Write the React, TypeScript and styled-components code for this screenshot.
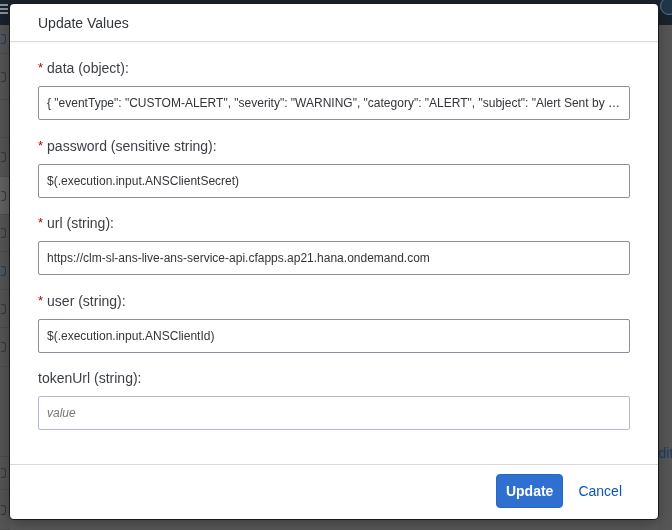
import React from "react";
import styled, { createGlobalStyle } from "styled-components";

const Global = createGlobalStyle`
  html, body { margin: 0; padding: 0; }
  body {
    width: 672px;
    height: 530px;
    overflow: hidden;
    background: #575757;
    font-family: "Liberation Sans", Arial, sans-serif;
  }
`;

const Page = styled.div`
  width: 672px;
  height: 530px;
  display: grid;
  grid-template-rows: 25px 1fr 11px;
  background: #575757;
`;

const ShellBar = styled.header`
  background: #19232d;
  display: flex;
  align-items: flex-start;
  justify-content: space-between;
  padding: 1px 0 0 0;
`;

const Hamburger = styled.div`
  width: 8px;
  display: flex;
  flex-direction: column;
  gap: 2px;
  padding-top: 3px;
  span { display: block; height: 2px; background: #8a939c; }
`;

const Avatar = styled.div`
  width: 16px;
  height: 16px;
  border-radius: 50%;
  border: 1px solid #5d7590;
  margin-right: -6px;
  margin-top: -4px;
  background: #22364a;
`;

const Middle = styled.div`
  display: grid;
  grid-template-columns: 10px 1fr 14px;
`;

const SideNav = styled.nav`
  background: #565656;
  display: flex;
  flex-direction: column;
  overflow: hidden;
`;

const NavItem = styled.div<{ $h: number; $active?: boolean }>`
  height: ${(p) => p.$h}px;
  flex-shrink: 0;
  box-sizing: border-box;
  border-bottom: 1px solid #4e4e4e;
  background: ${(p) => (p.$active ? "#626262" : "transparent")};
  display: flex;
  align-items: center;
  justify-content: flex-end;
`;

const NavGlyph = styled.span<{ $c?: string }>`
  width: 4px;
  height: 8px;
  border: 1.5px solid ${(p) => p.$c || "#33383d"};
  border-left: none;
  border-radius: 0 3px 3px 0;
  margin-right: 4px;
`;

const Canvas = styled.main`
  background: #595959;
`;

const RightRail = styled.aside`
  background: #575757;
  display: flex;
  flex-direction: column;
  justify-content: flex-end;
  padding-bottom: 69px;
  overflow: hidden;
`;

const EditLink = styled.span`
  color: #1b3c66;
  font-size: 14px;
  margin-left: -9px;
  white-space: nowrap;
`;

const BottomStrip = styled.footer`
  display: grid;
  grid-template-columns: 10px 187px 48px 39px 48px 113px 37px 126px 1fr;
  background: #555;
  overflow: hidden;
`;

const StripCell = styled.div<{ $bg: string; $pad?: number }>`
  background: ${(p) => p.$bg};
  overflow: hidden;
  font-size: 14px;
  color: #1e1e1e;
  line-height: 22px;
  padding-left: ${(p) => p.$pad || 0}px;
  white-space: nowrap;
`;

const StripButton = styled.div`
  margin-top: 1px;
  height: 20px;
  border: 1px solid #6a6a6a;
  border-radius: 3px;
`;

const Dialog = styled.section`
  position: fixed;
  left: 10px;
  top: 4px;
  width: 648px;
  height: 515px;
  background: #fff;
  border-radius: 4px;
  box-shadow: 0 0 0 1px #1a1a1a, 0 4px 16px rgba(0, 0, 0, 0.35);
  display: flex;
  flex-direction: column;
  overflow: hidden;
`;

const Header = styled.div`
  height: 37px;
  flex-shrink: 0;
  border-bottom: 1px solid #d9d9d9;
  display: flex;
  align-items: center;
  padding: 0 28px;
  box-shadow: 0 1px 2px rgba(0, 0, 0, 0.04);
`;

const Title = styled.h1`
  margin: 0;
  font-size: 14px;
  font-weight: normal;
  color: #32363a;
  padding-top: 1px;
`;

const Content = styled.div`
  flex: 1;
  padding: 16px 28px 0;
  display: flex;
  flex-direction: column;
  gap: 15.5px;
`;

const Field = styled.div`
  display: flex;
  flex-direction: column;
  gap: 8px;
`;

const Label = styled.label`
  height: 20px;
  line-height: 20px;
  font-size: 14px;
  color: #3b3f44;
  display: flex;
  gap: 4px;
`;

const Required = styled.span`
  color: #bb0000;
  font-size: 13px;
`;

const Input = styled.input<{ $light?: boolean }>`
  box-sizing: border-box;
  height: 34px;
  width: 100%;
  border: 1px solid ${(p) => (p.$light ? "#b3bccd" : "#89919a")};
  border-radius: 2px;
  padding: 0 8px;
  font-family: "Liberation Sans", Arial, sans-serif;
  font-size: 12px;
  color: #32363a;
  background: #fff;
  text-overflow: ellipsis;
  outline: none;
  &::placeholder {
    color: #74777a;
    font-style: italic;
  }
`;

const Footer = styled.div`
  height: 52px;
  flex-shrink: 0;
  border-top: 1px solid #d9d9d9;
  display: flex;
  align-items: center;
  justify-content: flex-end;
  padding: 0 23px 2px 0;
  gap: 2px;
`;

const Button = styled.button<{ $primary?: boolean }>`
  height: 34px;
  padding: 0 ${(p) => (p.$primary ? "9px" : "12px")};
  border-radius: 4px;
  border: 1px solid ${(p) => (p.$primary ? "#2a66c2" : "transparent")};
  background: ${(p) => (p.$primary ? "#2f6fcf" : "transparent")};
  color: ${(p) => (p.$primary ? "#fff" : "#0a56b4")};
  font-family: "Liberation Sans", Arial, sans-serif;
  font-size: 14px;
  font-weight: ${(p) => (p.$primary ? "bold" : "normal")};
  cursor: pointer;
`;

const fields = [
  {
    label: "data (object):",
    required: true,
    value:
      '{ "eventType": "CUSTOM-ALERT", "severity": "WARNING", "category": "ALERT", "subject": "Alert Sent by SAP Build Process Automation", "body": "..." }',
  },
  { label: "password (sensitive string):", required: true, value: "$(.execution.input.ANSClientSecret)" },
  {
    label: "url (string):",
    required: true,
    value: "https://clm-sl-ans-live-ans-service-api.cfapps.ap21.hana.ondemand.com",
  },
  { label: "user (string):", required: true, value: "$(.execution.input.ANSClientId)" },
  { label: "tokenUrl (string):", required: false, value: "" },
];

const navItems: { h: number; active?: boolean; c?: string; empty?: boolean }[] = [
  { h: 29, c: "#1c3f6a" },
  { h: 46 },
  { h: 38, empty: true },
  { h: 39 },
  { h: 38, active: true },
  { h: 37 },
  { h: 38, c: "#1c3f6a" },
  { h: 38 },
  { h: 39 },
  { h: 90, empty: true },
  { h: 33 },
  { h: 40 },
];

export default function App() {
  return (
    <>
      <Global />
      <Page>
        <ShellBar>
          <Hamburger>
            <span />
            <span />
            <span />
          </Hamburger>
          <Avatar />
        </ShellBar>
        <Middle>
          <SideNav>
            {navItems.map((n, i) => (
              <NavItem key={i} $h={n.h} $active={n.active}>
                {!n.empty && <NavGlyph $c={n.c} />}
              </NavItem>
            ))}
          </SideNav>
          <Canvas />
          <RightRail>
            <EditLink>Edit</EditLink>
          </RightRail>
        </Middle>
        <BottomStrip>
          <StripCell $bg="#575757" />
          <StripCell $bg="#4f4f4f" />
          <StripCell $bg="#545454" />
          <StripCell $bg="#575757" />
          <StripCell $bg="#162840" />
          <StripCell $bg="#585858" $pad={12}>Parameters</StripCell>
          <StripCell $bg="#585858">
            <StripButton />
          </StripCell>
          <StripCell $bg="#595959" />
          <StripCell $bg="#555555" />
        </BottomStrip>
      </Page>
      <Dialog role="dialog" aria-label="Update Values">
        <Header>
          <Title>Update Values</Title>
        </Header>
        <Content>
          {fields.map((f) => (
            <Field key={f.label}>
              <Label>
                {f.required && <Required>*</Required>}
                <span>{f.label}</span>
              </Label>
              <Input
                readOnly
                $light={!f.required}
                defaultValue={f.value}
                placeholder={f.required ? "" : "value"}
              />
            </Field>
          ))}
        </Content>
        <Footer>
          <Button $primary>Update</Button>
          <Button>Cancel</Button>
        </Footer>
      </Dialog>
    </>
  );
}
